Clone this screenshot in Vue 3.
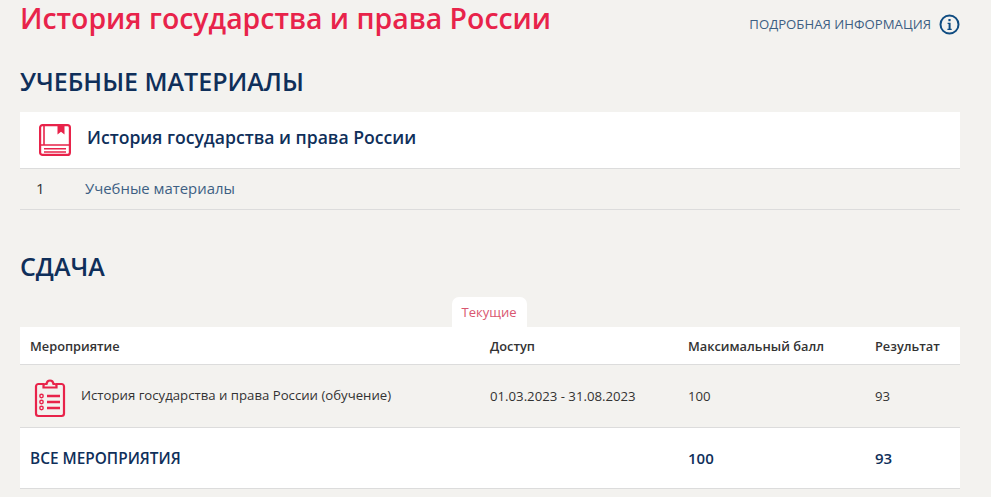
<script setup>
const title = 'История государства и права России'
const columns = ['Мероприятие', 'Доступ', 'Максимальный балл', 'Результат']
</script>

<template>
  <main class="page">
    <header class="top">
      <h1 class="title">{{ title }}</h1>
      <a class="info">
        <span>ПОДРОБНАЯ ИНФОРМАЦИЯ</span>
        <svg width="21" height="21" viewBox="0 0 21 21" fill="none">
          <circle cx="10.500" cy="10.500" r="9" stroke="#0f4c81" stroke-width="2" />
          <rect x="9.400" y="5" width="2.200" height="2.200" fill="#0f4c81" />
          <path d="M8.600 8.800h3v6h1.100v1.200H8.400v-1.200h1.200v-4.800h-1z" fill="#0f4c81" />
        </svg>
      </a>
    </header>

    <h2 class="section materials-h">УЧЕБНЫЕ МАТЕРИАЛЫ</h2>
    <div class="course">
      <svg class="book" width="34" height="34" viewBox="0 0 34 34" fill="none" stroke="#e8234a" stroke-width="2.200">
        <rect x="2.100" y="2.100" width="29.800" height="29.800" rx="2.500" />
        <path d="M6 2v20M2 22h30M6 25.700h22M6 29h22" stroke-width="1.600" />
        <path d="M19.500 2h7v9.500l-3.500-2.800-3.500 2.800z" fill="#e8234a" stroke="none" />
      </svg>
      <span>{{ title }}</span>
    </div>
    <div class="material">
      <span class="num">1</span>
      <a class="link">Учебные материалы</a>
    </div>

    <h2 class="section exam-h">СДАЧА</h2>
    <div class="tabs"><span class="tab">Текущие</span></div>
    <div class="grid head">
      <span v-for="c in columns" :key="c">{{ c }}</span>
    </div>
    <div class="grid row">
      <span class="event">
        <svg width="32" height="40" viewBox="0 0 32 40" fill="none" stroke="#e8234a" stroke-width="2.200">
          <path d="M10 6H4.500A2.500 2.500 0 0 0 2 8.500v27A2.500 2.500 0 0 0 4.500 38h23a2.500 2.500 0 0 0 2.500-2.500v-27A2.500 2.500 0 0 0 27.500 6H22" />
          <path d="M9.500 9.500V7.500c0-1 .7-1.500 1.700-1.500h1.300c.3-2 1.600-3.500 3.500-3.500s3.200 1.500 3.500 3.500h1.300c1 0 1.700.5 1.700 1.500v2z" />
          <circle cx="7.500" cy="18" r="1.700" stroke-width="1.400" />
          <circle cx="7.500" cy="24" r="1.700" stroke-width="1.400" />
          <circle cx="7.500" cy="30" r="1.700" stroke-width="1.400" />
          <path d="M13 18h13M13 24h13M13 30h13" stroke-width="2.400" />
        </svg>
        <span>История государства и права России (обучение)</span>
      </span>
      <span>01.03.2023 - 31.08.2023</span>
      <span>100</span>
      <span>93</span>
    </div>
    <div class="grid total">
      <span class="total-label">ВСЕ МЕРОПРИЯТИЯ</span>
      <span></span>
      <span class="strong">100</span>
      <span class="strong">93</span>
    </div>
  </main>
</template>

<style scoped>
.page {
  box-sizing: border-box;
  width: 991px;
  height: 497px;
  padding: 0 31px 0 20px;
  overflow: hidden;
  background: #f3f2ef;
  font-family: "Open Sans", sans-serif;
  color: #333;
}
.top {
  display: flex;
  justify-content: space-between;
  align-items: center;
  height: 41px;
}
.title {
  margin: -5px 0 0;
  font-size: 28.400px;
  font-weight: 600;
  line-height: 41px;
  color: #e8234a;
  white-space: nowrap;
}
.info {
  display: flex;
  align-items: center;
  gap: 8px;
  margin-top: 7px;
  font-size: 13.200px;
  color: #3d5f83;
}
.section {
  margin: 0;
  font-size: 25px;
  font-weight: 600;
  line-height: 32px;
  color: #0f2f5a;
}
.materials-h { margin-top: 24px; }
.course {
  display: flex;
  align-items: center;
  gap: 15px;
  height: 56px;
  margin-top: 15px;
  padding-left: 18px;
  background: #fff;
  border-bottom: 1px solid #dcdcdc;
  font-size: 17.600px;
  font-weight: 600;
  color: #0f2f5a;
}
.course span { margin-top: -6px; }
.material {
  display: flex;
  align-items: center;
  height: 40px;
  padding-left: 16px;
  border-bottom: 1px solid #dcdcdc;
  font-size: 14.900px;
}
.material span, .material a { margin-top: -2px; }
.num { width: 49px; color: #333; }
.link { color: #3d5f83; }
.exam-h { margin-top: 40px; }
.tabs {
  display: flex;
  justify-content: center;
  margin-top: 15px;
}
.tab {
  display: flex;
  align-items: center;
  justify-content: center;
  width: 75px;
  height: 30px;
  margin-right: 2px;
  background: #fff;
  border-radius: 7px 7px 0 0;
  font-size: 13px;
  color: #d9566f;
}
.grid {
  display: grid;
  grid-template-columns: 460px 198px 187px 1fr;
  align-items: center;
  padding-left: 10px;
  border-bottom: 1px solid #dcdcdc;
  font-size: 13.200px;
}
.head {
  height: 37px;
  background: #fff;
  font-weight: 600;
  font-size: 12.800px;
}
.row { height: 62px; }
.event {
  display: flex;
  align-items: center;
  gap: 15px;
  margin-left: -6px;
  padding-left: 10px;
}
.event svg { margin-top: 3px; }
.event span { margin-top: -2px; }
.total {
  height: 60px;
  background: #fff;
  font-size: 15px;
  font-weight: 600;
  color: #0f2f5a;
}
.total-label {
  font-size: 15.400px;
}
</style>

<style>
html, body { margin: 0; background: #f3f2ef; }
</style>
